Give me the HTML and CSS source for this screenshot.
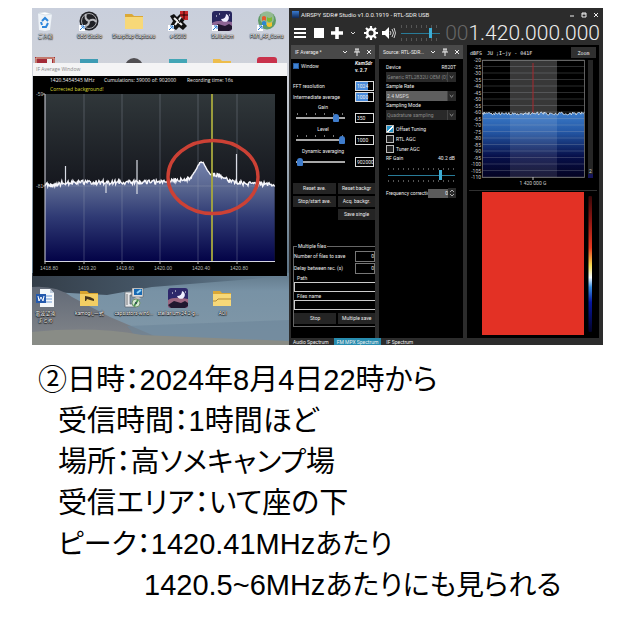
FILE: index.html
```html
<!DOCTYPE html>
<html lang="ja">
<head>
<meta charset="utf-8">
<title>受信記録</title>
<link rel="stylesheet" href="styles.css">
</head>
<body>
<main class="slide">
<section class="capture">
  <div class="desktop">
    <svg class="wallpaper" viewBox="0 0 257 337" preserveAspectRatio="none" aria-hidden="true">
      <defs>
        <linearGradient id="sky" x1="0" y1="0" x2="0" y2="1"><stop offset="0" stop-color="#c9cfdc"/><stop offset=".2" stop-color="#d0d3da"/><stop offset=".78" stop-color="#5f7688"/><stop offset=".84" stop-color="#7892a5"/><stop offset="1" stop-color="#8198a8"/></linearGradient>
        <linearGradient id="hill" x1="0" y1="0" x2="0" y2="1"><stop offset="0" stop-color="#626a77"/><stop offset="1" stop-color="#7f8388"/></linearGradient>
        <linearGradient id="shade" x1="0" y1="0" x2="1" y2="0"><stop offset="0" stop-color="#343e49"/><stop offset=".5" stop-color="#47596a"/><stop offset="1" stop-color="#6b8598"/></linearGradient>
      </defs>
      <rect width="257" height="337" fill="url(#sky)"/>
      <path d="M0 265H257V268L120 279L75 287L0 283Z" fill="url(#shade)"/>
      <path d="M0 279Q24 277 40 289L78 309L125 329H0Z" fill="url(#hill)"/>
      <path d="M95 318L257 312V337H110Z" fill="#6d8699" opacity=".6"/>
      <path d="M0 324Q60 318 110 327L257 333V337H0Z" fill="#898c86"/>
    </svg>
    <ul class="icons icons-top">
      <li><svg viewBox="0 0 20 20"><path d="M3 2l7-1 7 2-2 16-5 1-6-1z" fill="#eef3f8"/><path d="M3 2l7 2 7-1-7-2z" fill="#fff" stroke="#bcc8d4" stroke-width=".5"/><path d="M7 10l3-3 3 3M13 12l-2 4h-4M7 14l-1-3" fill="none" stroke="#2d86dc" stroke-width="2"/></svg><span>ごみ箱</span></li>
      <li><svg viewBox="0 0 20 20"><circle cx="10" cy="10" r="9.500" fill="#202126"/><circle cx="10" cy="10" r="7.500" fill="none" stroke="#a7a8ad"/><path d="M10 10Q5 8 7 3M10 10Q15 7 17 11M10 10Q10 15 5 15" fill="none" stroke="#b9babf" stroke-width="2"/><path d="M0 14h6v6H0z" fill="#fff"/><path d="M1 19l4-4M2 15h3v3" fill="none" stroke="#2779d2"/></svg><span>OBS Studio</span></li>
      <li><svg viewBox="0 0 20 20"><path d="M1 3h7l2 2h9v13H1z" fill="#dba836"/><path d="M1 6h18v12H1z" fill="#f7d878"/></svg><span>SharpCap Captures</span></li>
      <li><svg viewBox="0 0 20 20"><path d="M2 5l4-2 3 3 4-4 5 5-3 4 4 4-4 4-4-3-3 3-6-4 3-5z" fill="#111"/><path d="M12 0h8v9h-4l-4-4z" fill="#c9282a"/><path d="M16 0v8M12 4h8" stroke="#200"/><path d="M6 7l8 7M7 14l6-8" stroke="#eee" stroke-width="2"/><path d="M9 7l3 5" stroke="#111"/><path d="M0 14h6v6H0z" fill="#fff"/><path d="M1 19l4-4M2 15h3v3" fill="none" stroke="#2779d2"/></svg><span>e-SGU2</span></li>
      <li><svg viewBox="0 0 20 20"><rect width="20" height="20" rx="3" fill="#26265e"/><path d="M0 12q6-4 20-1v6q0 3-3 3H3q-3 0-3-3z" fill="#8c6594"/><path d="M0 17l6-4 7 2 4-2 3 2v3l-3 2H3z" fill="#20172f"/><path d="M14 3a4 4 0 1 1-5 5q5 0 5-5z" fill="#eef"/><path d="M4 5h1M7 3h1M17 4h1" stroke="#fff"/><path d="M0 14h6v6H0z" fill="#fff"/><path d="M1 19l4-4M2 15h3v3" fill="none" stroke="#2779d2"/></svg><span>Stellarium</span></li>
      <li><svg viewBox="0 0 20 20"><circle cx="10" cy="9.500" r="9" fill="#5f9b66"/><circle cx="10" cy="7" r="7" fill="#b5cfab" opacity=".6"/><path d="M5 6q2-2 4 0v4q-2-2-4 0z" fill="#e45a2e"/><path d="M10 6q2 2 5 0v4q-3 2-5 0z" fill="#7cba35"/><path d="M5 11q2-2 4 0v4q-2-2-4 0z" fill="#2e86cf"/><path d="M10 11q2 2 5 0v4q-3 2-5 0z" fill="#f3c32e"/><path d="M0 14h6v6H0z" fill="#fff"/><path d="M1 19l4-4M2 15h3v3" fill="none" stroke="#2779d2"/></svg><span>FM1_AF_Coms</span></li>
    </ul>
    <ul class="icons icons-hidden" aria-hidden="true">
      <li><svg viewBox="0 0 20 20"><path d="M0 0h20v20H0z" fill="#a32b38"/><path d="M1 1h18v18H1z" fill="none" stroke="#e1c9a3"/><path d="M12 2h5v5h-5z" fill="#eee"/></svg></li>
      <li><svg viewBox="0 0 20 20"><path d="M1 2h18v18H1z" fill="#3e9cb4"/></svg></li>
      <li><svg viewBox="0 0 20 20"><circle cx="10" cy="10" r="9" fill="#514f52"/></svg></li>
      <li><svg viewBox="0 0 20 20"><path d="M1 2h18v18H1z" fill="#43a6b6"/></svg></li>
      <li><svg viewBox="0 0 20 20"><path d="M1 2h7l2 2h9v16H1z" fill="#edbd4c"/></svg></li>
      <li><svg viewBox="0 0 20 20"><rect width="20" height="20" rx="3" fill="#c9324b"/></svg></li>
    </ul>
    <section class="average">
      <h2>IF Average Window</h2>
      <svg class="chart" viewBox="0 0 254 200" role="img" aria-label="IF Average">
        <defs>
          <linearGradient id="plot" x1="0" y1="0" x2="0" y2="1"><stop offset="0" stop-color="#30373a"/><stop offset=".55" stop-color="#15171e"/></linearGradient>
          <linearGradient id="fill" gradientUnits="userSpaceOnUse" x1="0" y1="85" x2="0" y2="185"><stop offset="0" stop-color="#7482ac"/><stop offset=".27" stop-color="#58658f"/><stop offset=".55" stop-color="#303b75"/><stop offset="1" stop-color="#030347"/></linearGradient>
        </defs>
        <rect width="254" height="200" fill="#000"/>
        <rect x="12" y="18" width="230" height="167" fill="url(#plot)"/>
        <path id="average-area" fill="url(#fill)"/>
        <path d="M51 18V185M89 18V185M127 18V185M165 18V185M204 18V185M12 110H242" stroke="#a4adbb" stroke-width=".7" opacity=".45"/>
        <path d="M12 18V186M12 185.500H242" stroke="#d5d6e1"/>
        <path d="M10 18H12M10 110H12M12 185V188M51 185V188M89 185V188M127 185V188M165 185V188M204 185V188" stroke="#bbb"/>
        <path d="M32.500 108V90M104 108V84M104 108V118M73 108V117M203.500 108V78" stroke="#d9dce5" stroke-width="1.200"/>
        <path id="average-line" fill="none" stroke="#f6f6fb" stroke-width="1.400"/>
        <path d="M179 18V185" stroke="#a8a93e" stroke-width="1.800"/>
        <ellipse cx="180" cy="101" rx="45" ry="36.500" fill="none" stroke="#cc4135" stroke-width="3.400"/>
        <g class="chart-note"><text x="17" y="6">1420.5454545 MHz</text><text x="71" y="6">Cumulations: 39000 of: 902000</text><text x="154" y="6">Recording time: 16s</text></g>
        <text class="chart-warning" x="17" y="15">Corrected background!</text>
        <g class="chart-axis"><text x="3" y="20">-59</text><text x="3" y="112">-81</text><text x="7" y="194">1418.80</text><text x="45" y="194">1419.20</text><text x="83" y="194">1419.60</text><text x="121" y="194">1420.00</text><text x="159" y="194">1420.40</text><text x="197" y="194">1420.80</text></g>
      </svg>
    </section>
    <ul class="icons icons-bottom">
      <li><svg viewBox="0 0 20 20"><path d="M5 1h10l4 4v14H5z" fill="#f5f8fb"/><path d="M15 1v4h4" fill="#bdcbdc"/><path d="M9 8h8M9 11h8M9 14h8" stroke="#719bd4"/><path d="M1 6h10v9H1z" fill="#2459ad"/><path d="M3 8l1 5 2-4 2 4 1-5" fill="none" stroke="#fff"/></svg><span>電波望遠<br>まとめ</span></li>
      <li><svg viewBox="0 0 20 20"><path d="M1 3h7l2 2h9v13H1z" fill="#d8a42f"/><path d="M1 6h18v12H1z" fill="#f3ce63"/><path d="M6 13V8l5 1 4 2v2l-4-1-3-1-1 2z" fill="#44351d"/></svg><span>kamogi_一式</span></li>
      <li><svg viewBox="0 0 20 20"><path d="M1 4h7v3H6v9h6v3H1z" fill="#e5e7ea" stroke="#59616a" stroke-width=".7"/><path d="M3 6v11" stroke="#777"/><path d="M8 0h11v9H8z" fill="#ddd" stroke="#555" stroke-width=".5"/><path d="M10 1h8v6h-8z" fill="#1869b2"/><path d="M13 5l4-3" stroke="#8fd5fa" stroke-width="2"/><path d="M12 9h3l2 2h-7z" fill="#bbb"/><circle cx="12" cy="15" r="4" fill="#d8e9d2" stroke="#71936c"/><path d="M10 18l4-6" stroke="#4a9651" stroke-width="2"/><circle cx="12" cy="15" r="1" fill="#345"/></svg><span>capsistors-win6...</span></li>
      <li><svg viewBox="0 0 20 20"><rect width="20" height="20" rx="3" fill="#2e286b"/><path d="M0 12q6-4 20-1v6q0 3-3 3H3q-3 0-3-3z" fill="#9b6681"/><path d="M0 17l6-4 7 2 4-2 3 2v3l-3 2H3z" fill="#20172f"/><path d="M14 3a4 4 0 1 1-5 5q5 0 5-5z" fill="#eef"/><path d="M4 5h1M7 3h1M17 4h1" stroke="#fff"/></svg><span>stellarium-24.2-g...</span></li>
      <li><svg viewBox="0 0 20 20"><path d="M1 3h7l2 2h9v13H1z" fill="#dba836"/><path d="M1 6h18v12H1z" fill="#f7d878"/><path d="M1 13h3l2-2h13" fill="none" stroke="#b48b36"/></svg><span>AOI</span></li>
    </ul>
  </div>

  <div class="sdr">
    <header class="titlebar"><i class="app-mark"></i><h1>AIRSPY SDR# Studio v1.0.0.1919 - RTL-SDR USB</h1>
      <button aria-label="最小化"><svg viewBox="0 0 6 6"><path d="M1 4h4"/></svg></button>
      <button aria-label="最大化"><svg viewBox="0 0 6 6"><path d="M1 1h4v4H1zM1 2h4"/></svg></button>
      <button aria-label="閉じる"><svg viewBox="0 0 6 6"><path d="M1 1l4 4M5 1L1 5"/></svg></button>
    </header>
    <div class="toolbar">
      <button aria-label="メニュー"><svg viewBox="0 0 14 14"><path d="M1 3h12M1 7h12M1 11h12" stroke="#fff" stroke-width="2"/></svg></button>
      <button aria-label="停止"><svg viewBox="0 0 14 14"><path d="M2 2h10v10H2z" fill="#fff"/></svg></button>
      <button aria-label="追加"><svg viewBox="0 0 14 14"><path d="M7 1v12M1 7h12" stroke="#fff" stroke-width="3.600"/></svg></button>
      <button class="tiny" aria-label="開く"><svg viewBox="0 0 8 14"><path d="M2 6l2 2 2-2" fill="none" stroke="#ddd"/></svg></button>
      <button aria-label="設定"><svg viewBox="0 0 14 14"><circle cx="7" cy="7" r="3.800" fill="none" stroke="#fff" stroke-width="2.600"/><path d="M7 0v3M7 11v3M0 7h3M11 7h3M2 2l2 2M10 10l2 2M2 12l2-2M10 4l2-2" stroke="#fff" stroke-width="2.200"/></svg></button>
      <button aria-label="音量"><svg viewBox="0 0 14 14"><path d="M0 5h3l4-4v12L3 9H0z" fill="#fff"/><path d="M8 5q2 2 0 4M10 3q3 4 0 8M12 2q3 5 0 10" fill="none" stroke="#d0d0d0"/></svg></button>
      <div class="volume ticks"><input class="range cyan" type="range" aria-label="音量" min="0" max="100" value="78"></div>
      <output class="frequency"><span>00</span>1.420.000.000</output>
    </div>
    <div class="workspace">
      <section class="panel">
        <header class="panel-head"><h2>IF Average *</h2><svg viewBox="0 0 34 10"><path d="M2 4l2 2 2-2M14 2h4M15 2v3M17 2v3M13 5h6M16 5v4M26 3l4 4M30 3l-4 4"/></svg></header>
        <div class="panel-body average-body">
          <div class="top-line"><label class="check"><input type="checkbox" checked>Window</label><p><em>KamSdr</em><br>v. 2.7</p></div>
          <label class="field"><span>FFT resolution</span><input class="selected" value="1024"></label>
          <label class="field"><span>Intermediate average</span><input class="selected" value="1000"></label>
          <div class="level"><label for="gain">Gain</label><div class="level-row"><span class="sparse"><input id="gain" class="range" type="range" value="86"></span><input aria-label="Gain value" value="350"></div></div>
          <div class="level"><label for="level">Level</label><div class="level-row"><span class="sparse"><input id="level" class="range" type="range" value="100"></span><input aria-label="Level value" value="1000"></div></div>
          <div class="level"><label for="dynamic">Dynamic averaging</label><div class="level-row"><span><input id="dynamic" class="range" type="range" value="3"></span><input aria-label="Dynamic value" value="902000"></div></div>
          <div class="actions"><button>Reset ave.</button><button>Reset backgr</button><button>Stop/start ave.</button><button>Acq. backgr.</button><button class="second">Save single</button></div>
          <fieldset>
            <legend>Multiple files</legend>
            <label class="number"><span>Number of files to save</span><input value="0"></label>
            <label class="number"><span>Delay between rec. (s)</span><input value="0"></label>
            <label class="stack">Path<input></label>
            <label class="stack">Files name<input></label>
            <div class="actions"><button>Stop</button><button>Multiple save</button></div>
          </fieldset>
        </div>
      </section>
      <section class="panel">
        <header class="panel-head"><h2>Source: RTL-SDR...</h2><svg viewBox="0 0 34 10"><path d="M2 4l2 2 2-2M14 2h4M15 2v3M17 2v3M13 5h6M16 5v4M26 3l4 4M30 3l-4 4"/></svg></header>
        <div class="panel-body source-body">
          <label class="source" for="device"><span>Device</span><span>R820T</span></label><div class="pick"><select id="device"><option>Generic RTL2832U OEM (0)</option></select><svg viewBox="0 0 9 10"><path d="M2 4l2 2 2-2"/></svg></div>
          <label class="source" for="rate">Sample Rate</label><div class="pick bright"><select id="rate"><option>2.4 MSPS</option></select><svg viewBox="0 0 9 10"><path d="M2 4l2 2 2-2"/></svg></div>
          <label class="source" for="mode">Sampling Mode</label><div class="pick"><select id="mode"><option>Quadrature sampling</option></select><svg viewBox="0 0 9 10"><path d="M2 4l2 2 2-2"/></svg></div>
          <div class="checks"><label class="check"><input type="checkbox" checked>Offset Tuning</label><label class="check"><input type="checkbox">RTL AGC</label><label class="check"><input type="checkbox">Tuner AGC</label></div>
          <label class="gain-label" for="rf"><span>RF Gain</span><span>40.2 dB</span></label>
          <div class="rf ticks"><input id="rf" class="range cyan" type="range" value="79"></div>
          <label class="correction"><span>Frequency correction</span><input value="0"><svg viewBox="0 0 8 10"><path d="M2 4l2-2 2 2M2 6l2 2 2-2"/></svg></label>
        </div>
      </section>
      <section class="spectrum">
        <header><span>dBFS</span><span class="signal">JU ;I~jy - 041F</span><button>Zoom</button></header>
        <svg viewBox="0 0 132 278" role="img" aria-label="Spectrum">
          <defs>
            <linearGradient id="water" x1="0" y1="0" x2="0" y2="1"><stop offset="0" stop-color="#3c7dcb"/><stop offset=".3" stop-color="#2458a6"/><stop offset=".68" stop-color="#07104b"/><stop offset="1" stop-color="#040322"/></linearGradient>
            <linearGradient id="heat" x1="0" y1="0" x2="0" y2="1"><stop offset="0" stop-color="#3c0909"/><stop offset=".18" stop-color="#8e1713"/><stop offset=".38" stop-color="#e53920"/><stop offset=".51" stop-color="#f7dc50"/><stop offset=".6" stop-color="#f5faff"/><stop offset=".67" stop-color="#388cdf"/><stop offset=".78" stop-color="#0717a0"/><stop offset="1" stop-color="#030327"/></linearGradient>
          </defs>
          <path id="spectrum-area" fill="url(#water)"/>
          <rect x="43" y="0" width="47" height="53" fill="#fff" opacity=".22"/>
          <rect x="43" y="53" width="47" height="64" fill="#fff" opacity=".1"/>
          <path id="spectrum-grid" stroke="#b4b8c0" stroke-width=".6" opacity=".4"/>
          <rect x="15.500" y=".500" width="102" height="117" fill="none" stroke="#777" stroke-width=".8"/>
          <path d="M66 3V53" stroke="#a8292e"/><path id="spectrum-line" fill="none" stroke="#e3edf8" stroke-width=".8"/>
          <g id="spectrum-labels"></g><path d="M66 117v3" stroke="#bbb"/><text class="center-label" x="66" y="125">1 420 000 G</text>
          <path d="M2 130.500H130" stroke="#303030"/>
          <path d="M15 132H117V275H15z" fill="#e33125"/>
          <rect x="121" y="0" width="5" height="118" fill="#262626"/><path d="M121 114h5v4h-5z" fill="#16165a"/><text x="122" y="113">2</text>
          <rect x="121.500" y="136" width="3.500" height="136" rx="1" fill="url(#heat)"/>
        </svg>
      </section>
    </div>
    <nav class="tabs"><a href="#audio">Audio Spectrum</a><a class="active" href="#mpx">FM MPX Spectrum</a><a href="#if">IF Spectrum</a></nav>
  </div>
</section>
<section class="notes">
  <p class="lead">②日時：2024年8月4日22時から</p>
  <p>受信時間：1時間ほど</p>
  <p>場所：高<span class="kana">ソメキャンプ</span>場</p>
  <p>受信エリア：いて座の下</p>
  <p><span class="kana">ピーク：</span>1420.41MHz<span class="kana">あたり</span></p>
  <p class="continued">1420.5~6MHz<span class="kana">あたりにも見られる</span></p>
</section>
</main>
<script src="script.js"></script>
</body>
</html>
```
FILE: styles.css
```css
* { box-sizing: border-box; }
body { margin: 0; background: #fff; color: #000; font-family: "Liberation Sans", "Noto Sans CJK JP", sans-serif; }
h1, h2, p, ul { margin: 0; padding: 0; font-weight: 400; }
button, input, select { font: inherit; color: inherit; margin: 0; padding: 0; border: 0; border-radius: 0; min-width: 0; }
.slide { padding: 8px 27px 0 32px; }
.capture { display: grid; grid-template-columns: 257fr 314fr; overflow: hidden; }

/* Desktop */
.desktop { position: relative; overflow: hidden; min-width: 0; }
.wallpaper { position: absolute; inset: 0; width: 100%; height: 100%; }
.icons { position: relative; display: grid; grid-template-columns: repeat(6, 1fr); margin-left: -9px; list-style: none; }
.icons li { display: flex; flex-direction: column; align-items: center; min-width: 0; }
.icons svg { width: 20px; height: 20px; flex: none; }
.icons span { font: 5px/7px Roboto, "Noto Sans CJK JP", sans-serif; color: #fff; text-align: center; text-shadow: 0 0 1px #000, 0 0 1px #000, 0 1px 1px #000; white-space: nowrap; margin-top: 2px; }
.icons-top { padding-top: 3px; height: 49px; }
.icons-hidden { height: 6px; overflow: hidden; }
.icons-bottom { padding-top: 12px; height: 69px; }
.average { position: relative; margin: 0 2px 0 1px; background: #000; }
.average h2 { height: 13px; padding-left: 3px; background: #f4f4f5; color: #888; font: 5px/13px "Open Sans", sans-serif; }
.chart { display: block; width: 100%; overflow: visible; }
.chart-note, .chart-warning { fill: #eee; font: 5px "Open Sans", sans-serif; }
.chart-warning { fill: #dddc39; }
.chart-axis { fill: #bbb; font: 5px "Liberation Sans", sans-serif; }

/* Radio application */
.sdr { display: flex; flex-direction: column; min-width: 0; background: #2c2c2c; color: #eee; font: 5px/8px Roboto, sans-serif; overflow: hidden; }
.sdr svg { flex: none; }
.titlebar { display: flex; align-items: center; height: 13px; padding: 0 4px 0 3px; gap: 6px; }
.titlebar h1 { flex: 1; margin-left: -4px; font-size: 6px; white-space: nowrap; }
.titlebar button, .toolbar button { display: flex; background: none; }
.titlebar button svg { width: 6px; height: 6px; fill: none; stroke: #eee; }
.app-mark { width: 7px; height: 7px; background: linear-gradient(#397bd1, #112853); }
.toolbar { display: flex; align-items: center; height: 24px; padding: 0 3px 0 4px; gap: 5px; }
.toolbar svg { width: 14px; height: 14px; }
.toolbar .tiny { margin-right: 2px; }
.toolbar .tiny svg { width: 8px; }
.frequency { margin-left: auto; font: 300 21px/24px Roboto, sans-serif; color: #eee; white-space: nowrap; }
.frequency span { color: #666; }
.volume { width: 40px; height: 16px; }
.ticks { display: flex; align-items: center; background: repeating-linear-gradient(90deg, #555 0 1px, transparent 1px 5px) top / 100% 3px no-repeat, repeating-linear-gradient(90deg, #555 0 1px, transparent 1px 5px) bottom / 100% 3px no-repeat; }
.range { appearance: none; display: block; width: 100%; height: 10px; background: linear-gradient(#a8a8a8, #a8a8a8) center / 100% 2px no-repeat; }
.range::-webkit-slider-thumb { appearance: none; width: 6px; height: 8px; border-radius: 3px 3px 1px 1px; background: #3e7ccc; }
.cyan { background-image: linear-gradient(#287b98, #287b98); background-size: 100% 1px; }
.cyan::-webkit-slider-thumb { width: 3px; height: 10px; border-radius: 0; background: #3daed6; }
.workspace { display: grid; grid-template-columns: 84fr 84fr 132fr; gap: 4px; padding: 0 4px 0 2px; }
.panel { background: #000; overflow: hidden; min-width: 0; }
.panel-head { display: flex; align-items: center; height: 14px; padding-left: 4px; background: #494949; }
.panel-head h2 { flex: 1; min-width: 0; font-size: 5px; white-space: nowrap; }
.panel-head svg { width: 34px; height: 10px; fill: none; stroke: #eee; }
.panel-body { white-space: nowrap; }
.average-body { padding-left: 2px; }
.top-line { display: flex; justify-content: space-between; height: 21px; padding-top: 1px; }
.top-line p { width: 20px; line-height: 7px; font-weight: 700; }
.check { display: flex; align-items: center; gap: 2px; height: 10px; }
.check input { appearance: none; width: 8px; height: 8px; border: 1px solid #bbb; background: #222; }
.check input:checked { background: #2795c9 linear-gradient(135deg, transparent 45%, #fff 45% 60%, transparent 60%); }
.top-line .check { height: 12px; }
.top-line .check input { width: 6px; height: 6px; background: #3d80d2; border: 1px solid #285d9f; }
.field, .level-row, .number { display: flex; align-items: center; }
.field { height: 11px; }
.field span { width: 62px; }
.field input, .level-row > input { width: 19px; height: 10px; background: #000; border: 1px solid #ddd; padding-left: 1px; line-height: 8px; flex: none; }
.field .selected { background: linear-gradient(#4a8bdb, #4a8bdb) left / 12px 100% no-repeat; }
.level { height: 22px; }
.level > label { display: block; width: 60px; height: 10px; line-height: 10px; text-align: center; }
.level-row { height: 12px; }
.level-row > span { width: 62px; padding: 0 10px 0 3px; }
.sparse { background: repeating-linear-gradient(90deg, #777 0 1px, transparent 1px 9px) 4px 0 / 50px 2px no-repeat; }
.average-body > .actions { margin-top: 15px; }
.actions { display: grid; grid-template-columns: 43fr 37fr; gap: 2px; }
.actions button { height: 11px; background: #242424; line-height: 11px; }
.second { grid-column: 2; }
fieldset { min-width: 0; margin: 22px 0 10px; padding: 0; border: 1px solid #666; border-right: 0; }
legend { padding: 0 1px; margin-left: 3px; line-height: 8px; }
.number { height: 12px; }
.number span { flex: 1; }
.number input { width: 20px; height: 11px; border: 1px solid #777; background: #000; text-align: right; }
.stack { display: block; line-height: 8px; text-indent: 3px; }
.stack input { display: block; width: 100%; height: 10px; border: 1px solid #ccc; border-right: 0; background: #000; }
fieldset .actions { padding: 3px 0 2px; }
.source-body { padding: 4px 7px; }
.source, .gain-label { display: flex; justify-content: space-between; height: 9px; line-height: 9px; }
.pick { display: flex; height: 10px; background: #292929; color: #888; }
.pick select { appearance: none; flex: 1; padding-left: 1px; line-height: 10px; background: none; }
.pick svg { width: 9px; height: 10px; fill: none; stroke: #aaa; background: #292929; border-left: 1px solid #444; }
.bright { background: #5e5e5e; color: #ddd; }
.checks { padding-top: 4px; }
.gain-label { padding-right: 1px; }
.rf { height: 14px; margin: 5px 1px 6px 2px; background-size: 100% 2px; }
.correction { display: flex; align-items: center; height: 10px; }
.correction span { flex: 1; min-width: 0; }
.correction input { width: 20px; height: 9px; background: #5b5b5b; text-align: right; }
.correction svg { width: 8px; height: 10px; fill: none; stroke: #aaa; background: #292929; }
.spectrum { background: #000; min-width: 0; }
.spectrum header { display: flex; align-items: center; gap: 5px; height: 15px; padding: 0 3px; font: 5px/8px "DejaVu Sans Mono", monospace; }
.spectrum header button { width: 25px; height: 11px; margin-left: auto; background: #303030; }
.spectrum .signal { white-space: nowrap; }
.spectrum > svg { display: block; width: 100%; overflow: visible; }
.spectrum svg text { fill: #ccc; font-size: 5px; }
.spectrum svg .center-label { text-anchor: middle; }
.tabs { display: flex; gap: 2px; height: 7px; padding-left: 1px; overflow: hidden; white-space: nowrap; line-height: 9px; }
.tabs a { padding: 0 3px; color: #eee; text-decoration: none; }
.tabs .active { background: #278caf; }

/* Observation notes */
.notes { padding: 15px 0 0 26px; font-size: 29px; line-height: 41px; font-feature-settings: "palt"; white-space: nowrap; }
.notes .lead { margin-left: -20px; }
.notes .continued { margin-left: 86px; }
.notes .kana { font-size: 28px; line-height: 1; }
```
FILE: script.js
```js
// Repeatable noise keeps the traces the same on every load.
let seed = 17;
function noise() {
  seed = (seed * 1103515245 + 12345) % 2147483648;
  return seed / 2147483648;
}
function trace(points) {
  return 'M' + points.map(([x, y]) => x.toFixed(1) + ' ' + y.toFixed(1)).join('L');
}
function draw(name, points, floor) {
  document.getElementById(name + '-line').setAttribute('d', trace(points));
  document.getElementById(name + '-area').setAttribute('d', `${trace(points)}V${floor}H${points[0][0]}Z`);
}

const knots = [[12, 109], [22, 110], [30, 107], [120, 106.5], [140, 105], [157, 103], [161, 97], [167, 86.5], [170, 86.5], [174, 94], [178, 99], [186, 100], [196, 105], [212, 108], [242, 109]];
const average = [];
for (let x = 12; x <= 242; x += 0.7) {
  const i = Math.max(1, knots.findIndex(k => k[0] >= x));
  const [x0, y0] = knots[i - 1];
  const [x1, y1] = knots[i];
  average.push([x, y0 + (y1 - y0) * (x - x0) / (x1 - x0) + (noise() - 0.6) * (x > 159 && x < 178 ? 1 : 4.4)]);
}
draw('average', average, 185);

const spectrum = [];
for (let x = 15.5; x <= 117.5; x += 0.8) spectrum.push([x, 52 + noise() * 3]);
draw('spectrum', spectrum, 117);

let grid = '';
let labels = '';
for (let i = 0; i <= 18; i++) {
  const y = i * 6.5;
  grid += `M15.5 ${y}H117.5`;
  labels += `<text x="14" y="${y + 2}" text-anchor="end">-${20 + i * 5}</text>`;
}
document.getElementById('spectrum-grid').setAttribute('d', grid);
document.getElementById('spectrum-labels').innerHTML = labels;
```
